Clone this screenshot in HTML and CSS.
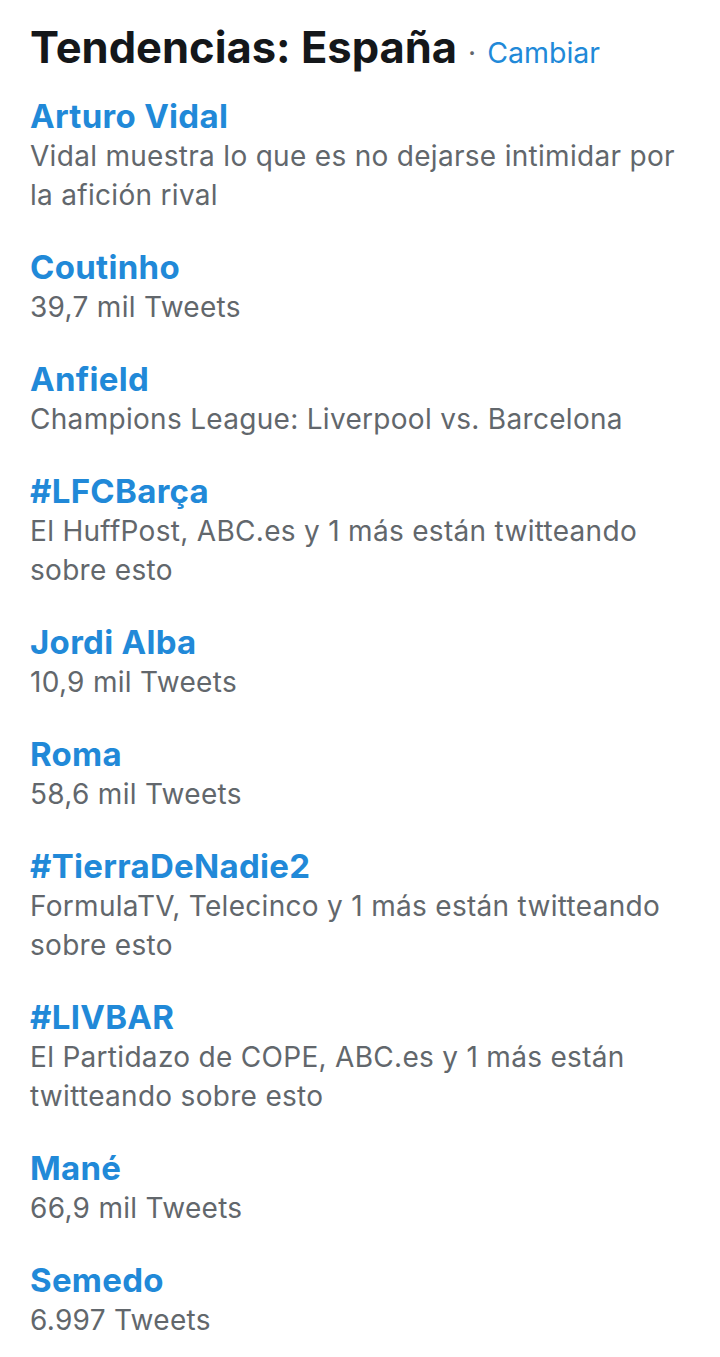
FILE: index.html
```html
<!DOCTYPE html>
<html lang="es">
<head>
    <meta charset="UTF-8">
    <meta name="viewport" content="width=device-width, initial-scale=1.0">
    <title>Tendencias: España</title>
    <link rel="stylesheet" href="styles.css">
</head>
<body>
    <div class="trends">
        <div class="trends-header">
            <h2 class="trends-title">Tendencias: España</h2>
            <span class="trends-dot">·</span>
            <a class="trends-change" href="#">Cambiar</a>
        </div>

        <ul class="trend-list">
            <li class="trend">
                <a class="trend-name" href="#">Arturo Vidal</a>
                <p class="trend-desc">Vidal muestra lo que es no dejarse intimidar por la afición rival</p>
            </li>
            <li class="trend">
                <a class="trend-name" href="#">Coutinho</a>
                <p class="trend-desc">39,7 mil Tweets</p>
            </li>
            <li class="trend">
                <a class="trend-name" href="#">Anfield</a>
                <p class="trend-desc">Champions League: Liverpool vs. Barcelona</p>
            </li>
            <li class="trend">
                <a class="trend-name" href="#">#LFCBarça</a>
                <p class="trend-desc">El HuffPost, ABC.es y 1 más están twitteando sobre esto</p>
            </li>
            <li class="trend">
                <a class="trend-name" href="#">Jordi Alba</a>
                <p class="trend-desc">10,9 mil Tweets</p>
            </li>
            <li class="trend">
                <a class="trend-name" href="#">Roma</a>
                <p class="trend-desc">58,6 mil Tweets</p>
            </li>
            <li class="trend">
                <a class="trend-name" href="#">#TierraDeNadie2</a>
                <p class="trend-desc">FormulaTV, Telecinco y 1 más están twitteando sobre esto</p>
            </li>
            <li class="trend">
                <a class="trend-name" href="#">#LIVBAR</a>
                <p class="trend-desc">El Partidazo de COPE, ABC.es y 1 más están twitteando sobre esto</p>
            </li>
            <li class="trend">
                <a class="trend-name" href="#">Mané</a>
                <p class="trend-desc">66,9 mil Tweets</p>
            </li>
            <li class="trend">
                <a class="trend-name" href="#">Semedo</a>
                <p class="trend-desc">6.997 Tweets</p>
            </li>
        </ul>
    </div>
</body>
</html>
```

FILE: styles.css
```css
* {
    margin: 0;
    padding: 0;
    box-sizing: border-box;
}

body {
    font-family: Inter, 'Noto Sans', sans-serif;
    background: #fff;
    color: #14171a;
}

.trends {
    padding: 22px 30px 30px 30px;
}

.trends-header {
    display: flex;
    align-items: baseline;
    gap: 11px;
    margin-bottom: 23px;
}

.trends-title {
    font-size: 43.5px;
    font-weight: 700;
    line-height: 50px;
    color: #14171a;
}

.trends-dot {
    font-size: 28px;
    color: #62676c;
}

.trends-change {
    font-size: 28.5px;
    color: #2189d8;
    text-decoration: none;
}

.trend-list {
    list-style: none;
}

.trend {
    margin-bottom: 31px;
}

.trend-name {
    display: block;
    font-size: 33px;
    font-weight: 700;
    letter-spacing: 0.3px;
    line-height: 42px;
    color: #2189d8;
    text-decoration: none;
}

.trend-desc {
    font-size: 28px;
    letter-spacing: 0.3px;
    line-height: 39px;
    color: #62676c;
}
```
